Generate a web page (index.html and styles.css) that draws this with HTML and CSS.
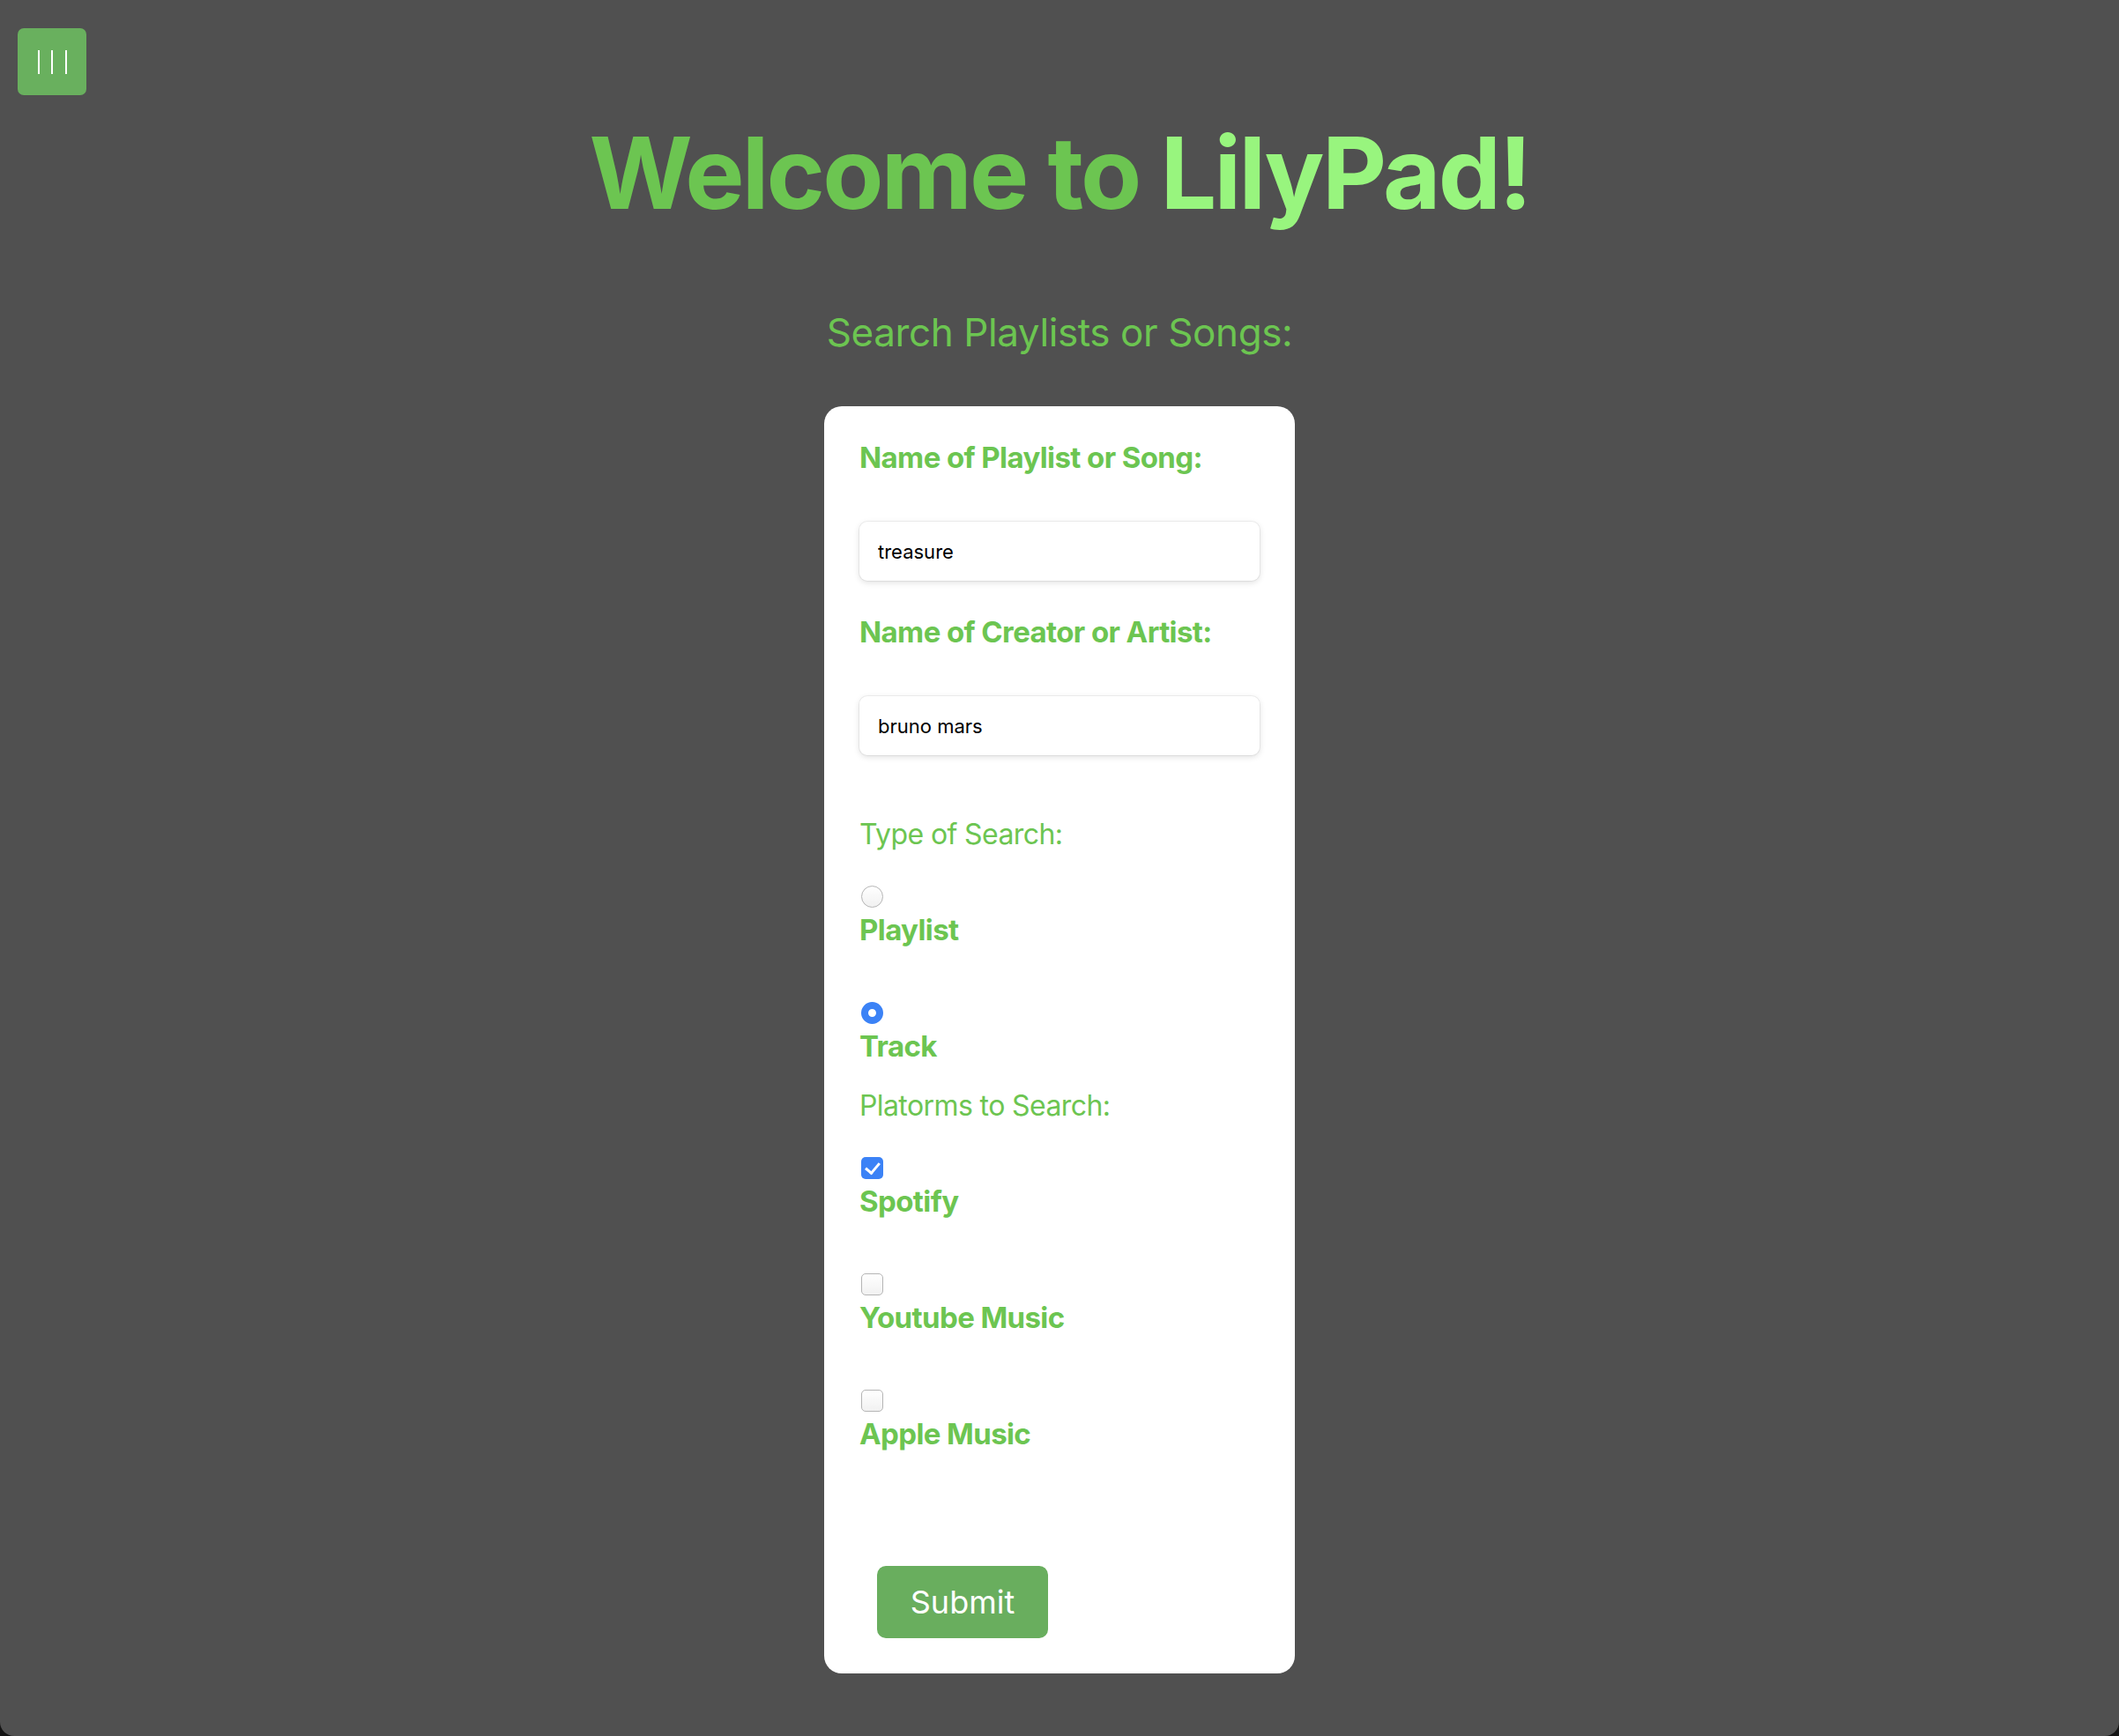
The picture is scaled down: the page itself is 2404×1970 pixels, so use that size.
FILE: index.html
```html
<!DOCTYPE html>
<html lang="en">
<head>
<meta charset="utf-8">
<title>LilyPad</title>
<link rel="stylesheet" href="styles.css">
</head>
<body>
<div class="page">
  <header class="topbar">
    <button class="menu-btn" type="button" aria-label="Menu">
      <span class="bar"></span><span class="bar"></span><span class="bar"></span>
    </button>
  </header>
  <main class="main">
    <h1 class="title">Welcome to <span class="accent">LilyPad!</span></h1>
    <h2 class="subtitle">Search Playlists or Songs:</h2>
    <form class="card">
      <label class="field-label" for="song">Name of Playlist or Song:</label>
      <input class="text-input" id="song" type="text" value="treasure">
      <label class="field-label second" for="artist">Name of Creator or Artist:</label>
      <input class="text-input" id="artist" type="text" value="bruno mars">

      <p class="group-title type-title">Type of Search:</p>
      <div class="option">
        <input class="radio" type="radio" name="type" id="playlist">
        <label class="option-label" for="playlist">Playlist</label>
      </div>
      <div class="option">
        <input class="radio" type="radio" name="type" id="track" checked>
        <label class="option-label" for="track">Track</label>
      </div>

      <p class="group-title platform-title">Platorms to Search:</p>
      <div class="option first">
        <input class="check" type="checkbox" id="spotify" checked>
        <label class="option-label" for="spotify">Spotify</label>
      </div>
      <div class="option">
        <input class="check" type="checkbox" id="youtube">
        <label class="option-label" for="youtube">Youtube Music</label>
      </div>
      <div class="option">
        <input class="check" type="checkbox" id="apple">
        <label class="option-label" for="apple">Apple Music</label>
      </div>

      <button class="submit" type="button">Submit</button>
    </form>
  </main>
</div>
</body>
</html>
```

FILE: styles.css
```css
html {
  background: #141414;
}
body {
  margin: 0;
  font-family: Inter, "Noto Sans", "Liberation Sans", sans-serif;
}
.page {
  min-height: 100vh;
  background: #505050;
  border-radius: 0 0 16px 16px;
  box-sizing: border-box;
  padding-bottom: 40px;
}
.topbar {
  display: flex;
  padding: 32px 0 0 20px;
  height: 76px;
}
.menu-btn {
  width: 78px;
  height: 76px;
  border: none;
  border-radius: 7px;
  background: #69b05e;
  display: flex;
  align-items: center;
  justify-content: center;
  gap: 13.5px;
  padding: 0;
  cursor: pointer;
}
.menu-btn .bar {
  display: block;
  width: 2px;
  height: 27px;
  background: #ffffff;
}
.main {
  display: flex;
  flex-direction: column;
  align-items: center;
}
.title {
  margin: 20px 0 0;
  font-size: 113px;
  line-height: 136px;
  font-weight: 700;
  letter-spacing: -2.8px;
  color: #6cc551;
}
.title .accent {
  color: #98f57e;
}
.subtitle {
  margin: 86px 0 0;
  font-size: 44px;
  line-height: 54px;
  font-weight: 400;
  letter-spacing: -0.4px;
  color: #6cc551;
}
.card {
  margin-top: 57px;
  width: 534px;
  box-sizing: border-box;
  background: #ffffff;
  border-radius: 20px;
  padding: 38px 40px 40px 40px;
  display: flex;
  flex-direction: column;
  align-items: flex-start;
}
.field-label {
  font-size: 33px;
  line-height: 40px;
  font-weight: 700;
  color: #6cc551;
  letter-spacing: -0.6px;
}
.field-label.second {
  margin-top: 38px;
}
.text-input {
  margin-top: 53px;
  width: 100%;
  height: 67px;
  box-sizing: border-box;
  border: none;
  border-radius: 9px;
  padding: 0 21px;
  font-family: Inter, "Noto Sans", sans-serif;
  font-size: 22px;
  color: #000000;
  background: #ffffff;
  box-shadow: 0 0 0 1px rgba(0, 0, 0, 0.05), 0 2px 7px rgba(0, 0, 0, 0.13);
  outline: none;
}
.group-title {
  margin: 0;
  font-size: 32px;
  line-height: 40px;
  font-weight: 400;
  letter-spacing: -0.6px;
  color: #6cc551;
}
.type-title {
  margin-top: 70px;
}
.platform-title {
  margin-top: 28px;
}
.option {
  display: flex;
  flex-direction: column;
  align-items: flex-start;
  margin-top: 62px;
}
.type-title + .option,
.option.first {
  margin-top: 38px;
}
.option-label {
  margin-top: 5px;
  font-size: 33px;
  line-height: 40px;
  font-weight: 700;
  color: #6cc551;
  letter-spacing: -0.6px;
}
.radio,
.check {
  appearance: none;
  -webkit-appearance: none;
  margin: 0 0 0 2px;
  width: 25px;
  height: 25px;
  box-sizing: border-box;
  border: 1px solid #b5b5b5;
  background: linear-gradient(#ffffff, #f1f1f1);
  position: relative;
}
.radio {
  border-radius: 50%;
}
.radio:checked {
  border: 8px solid #3b82f6;
  background: #ffffff;
}
.check {
  border-radius: 5px;
}
.check:checked {
  border: none;
  background: #3b82f6;
}
.check:checked::after {
  content: "";
  position: absolute;
  left: 8px;
  top: 3px;
  width: 7px;
  height: 13px;
  border-right: 3px solid #ffffff;
  border-bottom: 3px solid #ffffff;
  transform: rotate(40deg);
}
.submit {
  margin: 130px 0 0 20px;
  width: 194px;
  height: 82px;
  border: none;
  border-radius: 10px;
  background: #69ae5e;
  color: #ffffff;
  font-family: Inter, "Noto Sans", sans-serif;
  font-size: 36px;
  font-weight: 400;
  cursor: pointer;
}
```
